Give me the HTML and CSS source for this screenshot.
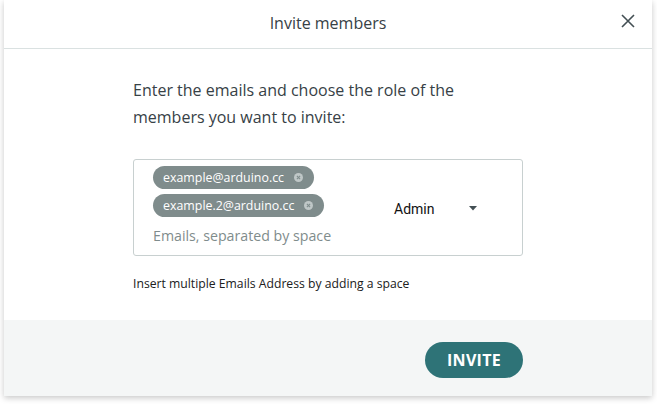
FILE: index.html
```html
<!DOCTYPE html>
<html>
<head>
<meta charset="utf-8">
<link rel="stylesheet" href="styles.css">
</head>
<body>
<div class="page">
  <div class="modal">
    <div class="header">
      <span class="title">Invite members</span>
      <button class="close" aria-label="Close">
        <svg width="16" height="16" viewBox="0 0 16 16"><path d="M2 2 L14 14 M14 2 L2 14" stroke="#434f54" stroke-width="1.6" fill="none"/></svg>
      </button>
    </div>
    <div class="content">
      <p class="intro">Enter the emails and choose the role of the members you want to invite:</p>
      <div class="field">
        <div class="emails">
          <span class="chip">example@arduino.cc <span class="chip-x"><svg width="9" height="9" viewBox="0 0 10 10"><circle cx="5" cy="5" r="5" fill="#bfc7c7"/><path d="M3.2 3.2 L6.8 6.8 M6.8 3.2 L3.2 6.8" stroke="#7f8c8c" stroke-width="1.2"/></svg></span></span>
          <span class="chip">example.2@arduino.cc <span class="chip-x"><svg width="9" height="9" viewBox="0 0 10 10"><circle cx="5" cy="5" r="5" fill="#bfc7c7"/><path d="M3.2 3.2 L6.8 6.8 M6.8 3.2 L3.2 6.8" stroke="#7f8c8c" stroke-width="1.2"/></svg></span></span>
          <span class="placeholder">Emails, separated by space</span>
        </div>
        <div class="role">
          <span class="role-label">Admin</span>
          <svg class="caret" width="8" height="5" viewBox="0 0 8 5"><path d="M0 0 H8 L4 4.5 Z" fill="#434f54"/></svg>
        </div>
      </div>
      <p class="hint">Insert multiple Emails Address by adding a space</p>
    </div>
    <div class="footer">
      <button class="invite">INVITE</button>
    </div>
  </div>
</div>
</body>
</html>
```
FILE: styles.css
```css
* { box-sizing: border-box; }
html, body { margin: 0; padding: 0; background: #ffffff; }
body { font-family: "Open Sans", "Liberation Sans", sans-serif; color: #434f54; }
.page { padding: 0 5px 8px 4px; }
.modal {
  width: 648px;
  background: #ffffff;
  box-shadow: 0 2px 6px rgba(0,0,0,0.22);
}
.header {
  height: 49px;
  border-bottom: 1px solid #dae1e1;
  display: flex;
  align-items: center;
  justify-content: center;
  position: relative;
}
.title { font-size: 16px; color: #374146; margin-top: -3px; }
.close {
  position: absolute;
  right: 16px;
  top: 13px;
  border: 0;
  background: none;
  padding: 0;
  width: 16px;
  height: 16px;
  display: flex;
}
.content { padding: 28px 129px 0 129px; }
.intro {
  margin: 0;
  font-size: 16px;
  line-height: 27px;
  color: #374146;
  width: 340px;
}
.field {
  margin-top: 28px;
  border: 1px solid #c8d0d0;
  border-radius: 3px;
  height: 97px;
  display: flex;
  padding: 6px 0 0 19px;
}
.emails {
  width: 241px;
  display: flex;
  flex-direction: column;
  align-items: flex-start;
  gap: 5px;
}
.chip {
  height: 23px;
  border-radius: 12px;
  background: #7f8c8c;
  color: #ffffff;
  font-size: 12.4px;
  display: inline-flex;
  align-items: center;
  padding: 0 11px 0 10px;
  gap: 10px;
}
.chip-x { display: flex; }
.placeholder { font-size: 14.2px; color: #7f8c8c; margin-top: 4px; }
.role {
  display: flex;
  align-items: center;
  padding-top: 35px;
  align-self: flex-start;
}
.role-label { font-family: "Roboto", "Open Sans", sans-serif; font-size: 14px; color: #111; width: 75px; }
.caret { margin-top: -2px; }
.hint { margin: 19px 0 0; font-size: 12.2px; color: #202020; line-height: 17px; }
.footer {
  margin-top: 28px;
  background: #f4f6f6;
  height: 76px;
  display: flex;
  justify-content: flex-end;
  align-items: flex-start;
  padding: 22px 129px 0 0;
}
.invite {
  width: 98px;
  height: 36px;
  border: 0;
  border-radius: 18px;
  background: #2e7377;
  color: #ffffff;
  font-family: "Open Sans", sans-serif;
  font-weight: 700;
  font-size: 16px;
  letter-spacing: 0.3px;
}
```
